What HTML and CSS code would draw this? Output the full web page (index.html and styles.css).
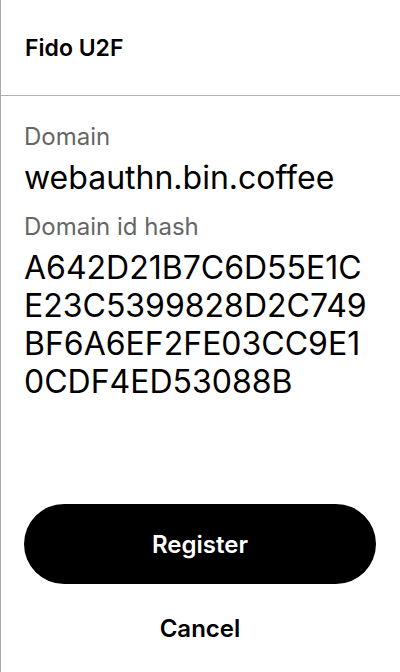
FILE: index.html
```html
<!DOCTYPE html>
<html lang="en">
<head>
<meta charset="utf-8">
<title>Fido U2F</title>
<link rel="stylesheet" href="styles.css">
</head>
<body>
<div class="screen">
  <header class="header">
    <h1 class="title">Fido U2F</h1>
  </header>
  <main class="content">
    <div class="label">Domain</div>
    <div class="value">webauthn.bin.coffee</div>
    <div class="label">Domain id hash</div>
    <div class="value hash">A642D21B7C6D55E1CE23C5399828D2C749BF6A6EF2FE03CC9E10CDF4ED53088B</div>
  </main>
  <footer class="actions">
    <button class="btn-primary" type="button">Register</button>
    <button class="btn-text" type="button">Cancel</button>
  </footer>
</div>
</body>
</html>
```

FILE: styles.css
```css
html, body {
  margin: 0;
  padding: 0;
  background: #fff;
}
body {
  font-family: Inter, "Noto Sans", sans-serif;
  color: #000;
}
.screen {
  height: 672px;
  box-sizing: border-box;
  border-left: 1px solid #aaaaaa;
  display: flex;
  flex-direction: column;
}
.header {
  height: 96px;
  flex: none;
  box-sizing: border-box;
  border-bottom: 1px solid #b0b0b0;
  padding: 0 24px;
  display: flex;
  align-items: center;
}
.title {
  margin: 0;
  font-size: 23px;
  font-weight: 600;
  line-height: 30px;
}
.content {
  flex: 1;
  padding: 25px 24px 0 23px;
}
.label {
  font-size: 24px;
  line-height: 32px;
  color: #666;
  margin-bottom: 6px;
}
.value {
  font-size: 32px;
  line-height: 38px;
  margin-bottom: 14px;
}
.hash {
  word-break: break-all;
  margin-bottom: 0;
}
.actions {
  flex: none;
  display: flex;
  flex-direction: column;
  padding: 0 24px 0 23px;
}
.btn-primary {
  height: 80px;
  border: 0;
  border-radius: 40px;
  background: #000;
  color: #fff;
  font-family: inherit;
  font-size: 24px;
  font-weight: 600;
}
.btn-text {
  height: 88px;
  border: 0;
  background: transparent;
  color: #000;
  font-family: inherit;
  font-size: 24px;
  font-weight: 600;
}
```
